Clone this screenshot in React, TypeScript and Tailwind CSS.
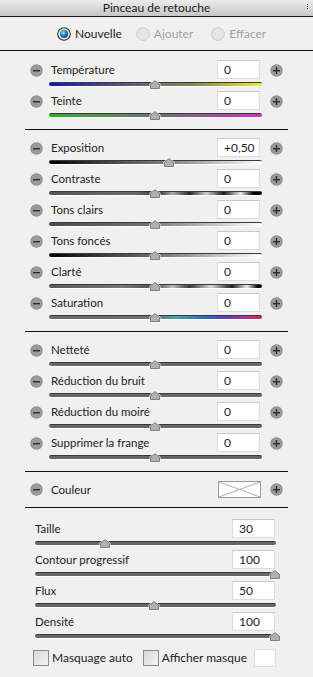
import type { CSSProperties } from "react"

const font = { fontFamily: 'Lato, "Noto Sans", Arial, sans-serif' }

type Row = { label: string; value: string; track: string; pos: number }

const tracks = {
  temp: "linear-gradient(90deg,#1616b8 0%,#55557a 35%,#6f6f6f 50%,#8a8a50 70%,#f0f020 100%)",
  tint: "linear-gradient(90deg,#27b427 0%,#5a8a5a 30%,#6f6f6f 50%,#8a5a8a 70%,#d030d0 100%)",
  expo: "linear-gradient(90deg,#000 0%,#555 35%,#8a8a8a 60%,#ffffff 100%)",
  contrast:
    "linear-gradient(90deg,#555 0%,#6a6a6a 40%,#3a3a3a 52%,#aaa 58%,#2a2a2a 66%,#cfcfcf 74%,#1a1a1a 82%,#e8e8e8 90%,#000 96%,#000 100%)",
  light: "linear-gradient(90deg,#4a4a4a 0%,#6f6f6f 45%,#b0b0b0 70%,#ffffff 100%)",
  dark: "linear-gradient(90deg,#000 0%,#3a3a3a 25%,#6f6f6f 50%,#b5b5b5 75%,#ffffff 100%)",
  clarity:
    "linear-gradient(90deg,#5a5a5a 0%,#777 35%,#4a4a4a 50%,#bbb 58%,#3a3a3a 66%,#d8d8d8 76%,#1e1e1e 86%,#eee 93%,#000 98%)",
  sat: "linear-gradient(90deg,#6a6a6a 0%,#6f6f6f 48%,#4aa0a0 60%,#3070c0 72%,#5040c0 82%,#b030a0 92%,#d02050 100%)",
  flat: "#676767",
}

const group1: Row[] = [
  { label: "Température", value: "0", track: tracks.temp, pos: 106 },
  { label: "Teinte", value: "0", track: tracks.tint, pos: 106 },
]
const group2: Row[] = [
  { label: "Exposition", value: "+0,50", track: tracks.expo, pos: 120 },
  { label: "Contraste", value: "0", track: tracks.contrast, pos: 106 },
  { label: "Tons clairs", value: "0", track: tracks.light, pos: 106 },
  { label: "Tons foncés", value: "0", track: tracks.dark, pos: 106 },
  { label: "Clarté", value: "0", track: tracks.clarity, pos: 106 },
  { label: "Saturation", value: "0", track: tracks.sat, pos: 106 },
]
const group3: Row[] = [
  { label: "Netteté", value: "0", track: tracks.flat, pos: 106 },
  { label: "Réduction du bruit", value: "0", track: tracks.flat, pos: 106 },
  { label: "Réduction du moiré", value: "0", track: tracks.flat, pos: 106 },
  { label: "Supprimer la frange", value: "0", track: tracks.flat, pos: 106 },
]
const brush: Row[] = [
  { label: "Taille", value: "30", track: tracks.flat, pos: 70 },
  { label: "Contour progressif", value: "100", track: tracks.flat, pos: 240 },
  { label: "Flux", value: "50", track: tracks.flat, pos: 119 },
  { label: "Densité", value: "100", track: tracks.flat, pos: 240 },
]

function RoundBtn({ plus }: { plus?: boolean }) {
  return (
    <svg width="13" height="13" viewBox="0 0 13 13" className="shrink-0">
      <circle cx="6.5" cy="6.5" r="6.2" fill="#8e8e8e" />
      <circle cx="6.5" cy="6.5" r="5.4" fill="#9a9a9a" />
      <rect x="3" y="6" width="7" height="1.4" fill="#2e2e2e" />
      {plus && <rect x="5.8" y="3" width="1.4" height="7" fill="#2e2e2e" />}
    </svg>
  )
}

function Thumb({ left }: { left: number }) {
  return (
    <svg
      width="12"
      height="11"
      viewBox="0 0 12 11"
      className="absolute top-[-4px]"
      style={{ left: left - 6 } as CSSProperties}
    >
      <path d="M6 0.5 L11.5 5 L11.5 10.5 L0.5 10.5 L0.5 5 Z" fill="#f4f4f4" />
      <path d="M6 1.6 L10.5 5.3 L10.5 9.5 L1.5 9.5 L1.5 5.3 Z" fill="#b0b0b0" stroke="#6c6c6c" strokeWidth="0.8" />
    </svg>
  )
}

function Track({ bg, pos }: { bg: string; pos: number }) {
  return (
    <div className="relative h-[4px] rounded-full border-t border-[#3a3a3a] shadow-[0_1px_0_#ffffff]" style={{ background: bg }}>
      <Thumb left={pos} />
    </div>
  )
}

function ValueBox({ value }: { value: string }) {
  return (
    <div className="w-[43px] h-[19px] bg-white border border-[#dcdcdc] border-t-[#c8c8c8] pl-[6px] text-[12px] leading-[17px] text-[#222]">
      {value}
    </div>
  )
}

function SliderRow({ row }: { row: Row }) {
  return (
    <div className="flex h-[31px]">
      <div className="ml-[30px] mt-[4px]">
        <RoundBtn />
      </div>
      <div className="ml-[6px] w-[213px]">
        <div className="flex h-[19px] items-center justify-between pr-[2px]">
          <span className="pl-[2px] text-[11.5px] text-[#222] whitespace-nowrap">{row.label}</span>
          <ValueBox value={row.value} />
        </div>
        <div className="mt-[3px]">
          <Track bg={row.track} pos={row.pos} />
        </div>
      </div>
      <div className="ml-[8px] mt-[4px]">
        <RoundBtn plus />
      </div>
    </div>
  )
}

function BrushRow({ row }: { row: Row }) {
  return (
    <div className="h-[31px] ml-[35px] w-[241px]">
      <div className="flex h-[19px] items-center justify-between pr-[1px]">
        <span className="text-[11.5px] text-[#222] whitespace-nowrap">{row.label}</span>
        <ValueBox value={row.value} />
      </div>
      <div className="mt-[3px]">
        <Track bg={row.track} pos={row.pos} />
      </div>
    </div>
  )
}

function Radio({ label, active }: { label: string; active?: boolean }) {
  return (
    <div className="flex items-center gap-[4px]">
      {active ? (
        <svg width="14" height="14" viewBox="0 0 14 14">
          <defs>
            <radialGradient id="rb" cx="0.4" cy="0.35" r="0.7">
              <stop offset="0" stopColor="#9fe0ff" />
              <stop offset="0.5" stopColor="#1f86c4" />
              <stop offset="1" stopColor="#0b3a66" />
            </radialGradient>
          </defs>
          <circle cx="7" cy="7" r="6.3" fill="#e8e8e8" stroke="#2c2c2c" strokeWidth="1.1" />
          <circle cx="7" cy="7" r="4" fill="url(#rb)" />
        </svg>
      ) : (
        <svg width="14" height="14" viewBox="0 0 14 14">
          <circle cx="7" cy="7" r="6.3" fill="#ececec" stroke="#c6c6c6" strokeWidth="1" />
          <circle cx="7" cy="7" r="5" fill="#e4e4e4" />
        </svg>
      )}
      <span className={`text-[12px] whitespace-nowrap ${active ? "text-[#222]" : "text-[#a3a3a3]"}`}>{label}</span>
    </div>
  )
}

function Checkbox({ label }: { label: string }) {
  return (
    <div className="flex items-center gap-[3px]">
      <div className="w-[16px] h-[16px] border border-[#8a8a8a] bg-gradient-to-br from-[#d8d8d8] to-[#f4f4f4]" />
      <span className="text-[12px] text-[#222] whitespace-nowrap">{label}</span>
    </div>
  )
}

const Sep = () => <div className="mx-[25px] h-px bg-[#111]" />

export default function App() {
  return (
    <div className="w-[313px] h-[677px] bg-[#f0f0f0] overflow-hidden" style={font}>
      <div className="relative h-[17px] bg-gradient-to-b from-[#ececec] to-[#c6c6c6] border-b border-[#1a1a1a] flex items-center justify-center">
        <span className="text-[12px] text-[#222] leading-none">Pinceau de retouche</span>
        <div className="absolute right-[5px] top-[4px] flex flex-col gap-[1px]">
          <div className="w-px h-px bg-[#333]" />
          <div className="w-px h-px bg-[#333]" />
          <div className="w-px h-px bg-[#333]" />
        </div>
      </div>

      <div className="h-[34px] flex items-center pl-[57px] border-b border-[#111]">
        <Radio label="Nouvelle" active />
        <div className="ml-[14px]">
          <Radio label="Ajouter" />
        </div>
        <div className="ml-[18px]">
          <Radio label="Effacer" />
        </div>
      </div>

      <div className="pt-[9px] pb-[7px]">
        {group1.map((r) => (
          <SliderRow key={r.label} row={r} />
        ))}
      </div>
      <Sep />
      <div className="pt-[8px] pb-[7px]">
        {group2.map((r) => (
          <SliderRow key={r.label} row={r} />
        ))}
      </div>
      <Sep />
      <div className="pt-[8px] pb-[7px]">
        {group3.map((r) => (
          <SliderRow key={r.label} row={r} />
        ))}
      </div>
      <Sep />
      <div className="flex h-[35px] items-center">
        <div className="ml-[30px]">
          <RoundBtn />
        </div>
        <span className="ml-[8px] text-[11.5px] text-[#222]">Couleur</span>
        <svg width="43" height="17" viewBox="0 0 43 17" className="ml-auto">
          <rect x="0.5" y="0.5" width="42" height="16" fill="#fff" stroke="#9a9a9a" />
          <path d="M1 1 L42 16 M42 1 L1 16" stroke="#9a9a9a" strokeWidth="0.8" />
        </svg>
        <div className="ml-[9px] mr-[30px]">
          <RoundBtn plus />
        </div>
      </div>
      <Sep />
      <div className="pt-[11px]">
        {brush.map((r) => (
          <BrushRow key={r.label} row={r} />
        ))}
      </div>
      <div className="flex items-center h-[28px] pl-[33px] pr-[37px] mt-[1px]">
        <Checkbox label="Masquage auto" />
        <div className="ml-[10px]">
          <Checkbox label="Afficher masque" />
        </div>
        <div className="ml-auto w-[22px] h-[18px] bg-white border border-[#dcdcdc]" />
      </div>
    </div>
  )
}
